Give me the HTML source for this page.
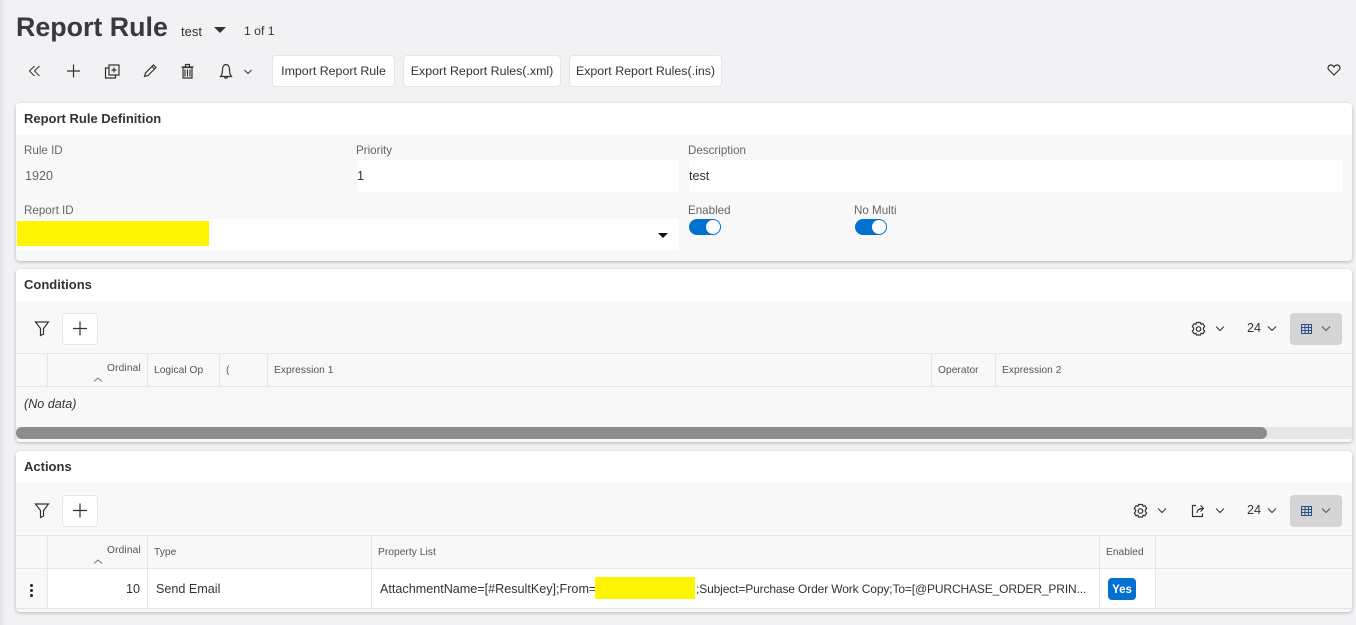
<!DOCTYPE html>
<html><head><meta charset="utf-8"><style>
html,body{margin:0;padding:0;width:1356px;height:625px;overflow:hidden;background:#f2f1f4;font-family:"Liberation Sans","Noto Sans CJK SC",sans-serif;color:#333}
.a{position:absolute;white-space:nowrap}
.t{position:absolute;white-space:nowrap;line-height:16px}
.card{position:absolute;left:16px;width:1336px;background:#f8f8f9;border-radius:4px;box-shadow:0 1px 3px rgba(0,0,0,.25);overflow:hidden}
.hd{position:absolute;left:0;top:0;width:100%;background:#fff}
.btn{position:absolute;top:55px;height:30px;background:#fff;border:1px solid #e6e6ea;border-radius:4px;font-size:12.4px;line-height:30px;text-align:center;color:#333;box-sizing:content-box}
.lab{font-size:11.6px;color:#666}
.val{font-size:12.6px;color:#333}
.h{font-size:13px;font-weight:bold;color:#333}
.th{font-size:10.2px;color:#555;letter-spacing:.05px}
.ln{position:absolute;background:#e6e6e8}
svg{position:absolute;overflow:visible;fill:none;stroke:#333;stroke-width:1.2}
.tog{position:absolute;width:32px;height:16px;border-radius:8px;background:#0270d1}
.tog i{position:absolute;right:1px;top:1px;width:14px;height:14px;border-radius:50%;background:#fff}
</style></head><body>
<div class="a" style="left:0;top:0;width:5px;height:625px;background:linear-gradient(90deg,#e4e4e6,#f2f1f4)"></div>
<div class="t" style="left:16px;top:10px;font-size:26.8px;line-height:34px;font-weight:bold;color:#3a3a3c">Report Rule</div>
<div class="t" style="left:181px;top:24px;font-size:13px">test</div>
<div class="a" style="left:214px;top:27px;width:0;height:0;border:6px solid transparent;border-top:6px solid #333;border-bottom:0"></div>
<div class="t" style="left:244px;top:23px;font-size:12.2px">1 of 1</div>

<svg style="left:0;top:0" width="1" height="1">
<path d="M34.500 66l-5 5 5 5M39.500 66l-5 5 5 5" stroke-width="1"/>
<path d="M67 71h13M73.500 64.500v13"/>
<path d="M109 65h10v10h-10zM114 67.500v5M111.500 70h5M109 68h-3.500v10h10v-3"/>
<path d="M144.500 76.500l1-3.500 8-8 2.500 2.500-8 8zM152 66.500l2.500 2.500"/>
<path d="M183 67.500v10.500h9v-10.500zM181.500 67h12M185.500 66.500v-2h4v2M185 69.500v7M187.500 69.500v7M190 69.500v7" />
<path d="M221.500 75c1-1.500 1-3 1-5.500 0-2.500 1.300-5 3.500-5s3.500 2.500 3.500 5c0 2.500 0 4 1 5.500l1 1.500h-11zM224.500 77c.3 1.500 2.700 1.500 3 0"/>
<path d="M244.500 70l3.500 3.500 3.500-3.500" stroke-width="1"/>
</svg>

<div class="btn" style="left:272px;width:121px">Import Report Rule</div>
<div class="btn" style="left:403px;width:156px">Export Report Rules(.xml)</div>
<div class="btn" style="left:569px;width:151px">Export Report Rules(.ins)</div>
<svg style="left:0;top:0" width="1" height="1"><path d="M1334 75l-5-5c-2-2-.5-5 1.800-5 1.500 0 2.500.8 3.200 2 .7-1.200 1.700-2 3.200-2 2.300 0 3.800 3 1.800 5z"/></svg>

<div class="card" style="top:103px;height:158px">
 <div class="hd" style="height:32px"></div>
 <div class="t h" style="left:8px;top:8px">Report Rule Definition</div>
 <div class="t lab" style="left:8px;top:40px">Rule ID</div>
 <div class="t val" style="left:9px;top:65px;color:#666">1920</div>
 <div class="t lab" style="left:340px;top:40px">Priority</div>
 <div class="a" style="left:341px;top:57px;width:322px;height:32px;background:#fff"></div>
 <div class="t val" style="left:341px;top:65px">1</div>
 <div class="t lab" style="left:672px;top:40px">Description</div>
 <div class="a" style="left:673px;top:57px;width:654px;height:32px;background:#fff"></div>
 <div class="t val" style="left:673px;top:65px">test</div>
 <div class="t lab" style="left:8px;top:100px">Report ID</div>
 <div class="a" style="left:1px;top:116px;width:662px;height:31px;background:#fff"></div>
 <div class="a" style="left:1px;top:118px;width:192px;height:25px;background:#fff500"></div>
 <div class="a" style="left:642px;top:130px;width:0;height:0;border:5px solid transparent;border-top:5px solid #111;border-bottom:0"></div>
 <div class="t lab" style="left:672px;top:100px">Enabled</div>
 <div class="tog" style="left:673px;top:116px"><i></i></div>
 <div class="t lab" style="left:838px;top:100px">No Multi</div>
 <div class="tog" style="left:839px;top:116px"><i></i></div>
</div>

<div class="card" style="top:269px;height:173px">
 <div class="hd" style="height:33px"></div>
 <div class="t h" style="left:8px;top:8px">Conditions</div>
 <div class="a" style="left:46px;top:44px;width:34px;height:30px;background:#fff;border:1px solid #e6e6ea;border-radius:4px"></div>
 <svg style="left:0;top:0" width="1" height="1">
  <path d="M19.500 53h13l-5 6.500v5.500l-3 1.500v-7z"/><path d="M57 59.500h14M64 52.500v14"/>
  <g transform="translate(1182.500 60)"><circle r="2.300"/><path d="M-2 -6.500h4l.6 1.800 1.800-.6 1.800 2.800-1.300 1.500v1.500l1.300 1.500-1.800 2.800-1.800-.6-.6 1.800h-4l-.6-1.800-1.800.6-1.800-2.800 1.300-1.500v-1.500l-1.300-1.500 1.800-2.800 1.800.6z"/></g>
  <path d="M1200 57.500l4 4 4-4M1252 57.500l4 4 4-4" stroke-width="1"/>
 </svg>
 <div class="t" style="left:1231px;top:51px;font-size:12.6px">24</div>
 <div class="a" style="left:1274px;top:44px;width:52px;height:32px;background:#d5d5d8;border-radius:4px"></div>
 <svg style="left:0;top:0" width="1" height="1">
  <path d="M1285.500 55.500h10v9h-10zM1285.500 58.500h10M1285.500 61.500h10M1289 55.500v9M1292.500 55.500v9" stroke="#2c4f86" stroke-width="1"/>
  <path d="M1306 57.500l4 4 4-4" stroke="#555" stroke-width="1"/>
 </svg>
 <div class="ln" style="left:0;top:84px;width:100%;height:1px"></div>
 <div class="ln" style="left:0;top:117px;width:100%;height:1px"></div>
 <div class="ln" style="left:31px;top:84px;width:1px;height:33px"></div>
 <div class="ln" style="left:131px;top:84px;width:1px;height:33px"></div>
 <div class="ln" style="left:203px;top:84px;width:1px;height:33px"></div>
 <div class="ln" style="left:251px;top:84px;width:1px;height:33px"></div>
 <div class="ln" style="left:915px;top:84px;width:1px;height:33px"></div>
 <div class="ln" style="left:979px;top:84px;width:1px;height:33px"></div>
 <div class="t th" style="left:91px;top:92px;letter-spacing:.15px">Ordinal</div>
 <svg style="left:0;top:0" width="1" height="1"><path d="M78 112.500l4-3.500 4 3.500" stroke="#777" stroke-width="1"/></svg>
 <div class="t th" style="left:138px;top:94px">Logical Op</div>
 <div class="t th" style="left:210px;top:94px">(</div>
 <div class="t th" style="left:258px;top:94px">Expression 1</div>
 <div class="t th" style="left:922px;top:94px">Operator</div>
 <div class="t th" style="left:986px;top:94px">Expression 2</div>
 <div class="t" style="left:8px;top:127px;font-size:12.6px;font-style:italic">(No data)</div>
 <div class="a" style="left:0;top:158px;width:100%;height:12px;background:#e6e6e6"></div>
 <div class="a" style="left:0;top:158px;width:1251px;height:12px;background:#8c8c8c;border-radius:6px"></div>
</div>

<div class="card" style="top:451px;height:161px">
 <div class="hd" style="height:32px"></div>
 <div class="t h" style="left:8px;top:8px">Actions</div>
 <div class="a" style="left:46px;top:44px;width:34px;height:30px;background:#fff;border:1px solid #e6e6ea;border-radius:4px"></div>
 <svg style="left:0;top:0" width="1" height="1">
  <path d="M19.500 53h13l-5 6.500v5.500l-3 1.500v-7z"/><path d="M57 59.500h14M64 52.500v14"/>
  <g transform="translate(1124.500 60)"><circle r="2.300"/><path d="M-2 -6.500h4l.6 1.800 1.800-.6 1.800 2.800-1.300 1.500v1.500l1.300 1.500-1.800 2.800-1.800-.6-.6 1.800h-4l-.6-1.800-1.800.6-1.800-2.800 1.300-1.500v-1.500l-1.300-1.500 1.800-2.800 1.800.6z"/></g>
  <path d="M1142 57.500l4 4 4-4M1200 57.500l4 4 4-4M1252 57.500l4 4 4-4" stroke-width="1"/>
  <path d="M1180 54.500h-3.500v11h10v-3M1181 62c0-3 2-4.500 6-4.500M1184.500 54.500l3 3-3 3"/>
 </svg>
 <div class="t" style="left:1231px;top:51px;font-size:12.6px">24</div>
 <div class="a" style="left:1274px;top:44px;width:52px;height:32px;background:#d5d5d8;border-radius:4px"></div>
 <svg style="left:0;top:0" width="1" height="1">
  <path d="M1285.500 55.500h10v9h-10zM1285.500 58.500h10M1285.500 61.500h10M1289 55.500v9M1292.500 55.500v9" stroke="#2c4f86" stroke-width="1"/>
  <path d="M1306 57.500l4 4 4-4" stroke="#555" stroke-width="1"/>
 </svg>
 <div class="a" style="left:32px;top:118px;width:1108px;height:39px;background:#fff"></div>
 <div class="a" style="left:1140px;top:118px;width:200px;height:39px;background:#f8f8f9"></div>
 <div class="ln" style="left:0;top:84px;width:100%;height:1px"></div>
 <div class="ln" style="left:0;top:117px;width:100%;height:1px"></div>
 <div class="ln" style="left:0;top:157px;width:100%;height:1px"></div>
 <div class="ln" style="left:31px;top:84px;width:1px;height:73px"></div>
 <div class="ln" style="left:131px;top:84px;width:1px;height:73px"></div>
 <div class="ln" style="left:355px;top:84px;width:1px;height:73px"></div>
 <div class="ln" style="left:1083px;top:84px;width:1px;height:73px"></div>
 <div class="ln" style="left:1139px;top:84px;width:1px;height:73px"></div>
 <div class="t th" style="left:91px;top:92px;letter-spacing:.15px">Ordinal</div>
 <svg style="left:0;top:0" width="1" height="1"><path d="M78 112.500l4-3.500 4 3.500" stroke="#777" stroke-width="1"/></svg>
 <div class="t th" style="left:138px;top:94px">Type</div>
 <div class="t th" style="left:362px;top:94px">Property List</div>
 <div class="t th" style="left:1090px;top:94px">Enabled</div>
 <div class="a" style="left:14px;top:133px;width:3px;height:3px;background:#222;border-radius:50%;box-shadow:0 5px 0 #222,0 10px 0 #222"></div>
 <div class="t val" style="left:110px;top:130px">10</div>
 <div class="t val" style="left:140px;top:130px">Send Email</div>
 <div class="t val" style="left:364px;top:130px">AttachmentName=[#ResultKey];From=</div>
 <div class="a" style="left:579px;top:126px;width:100px;height:22px;background:#fff500"></div>
 <div class="t val" style="left:680px;top:130px;font-size:12px;letter-spacing:-.13px">;Subject=Purchase Order Work Copy;To=[@PURCHASE_ORDER_PRIN...</div>
 <div class="a" style="left:1092px;top:127px;width:28px;height:22px;background:#0270d1;border-radius:4px;color:#fff;font-size:11.5px;font-weight:bold;line-height:24px;text-align:center">Yes</div>
</div>
</body></html>
